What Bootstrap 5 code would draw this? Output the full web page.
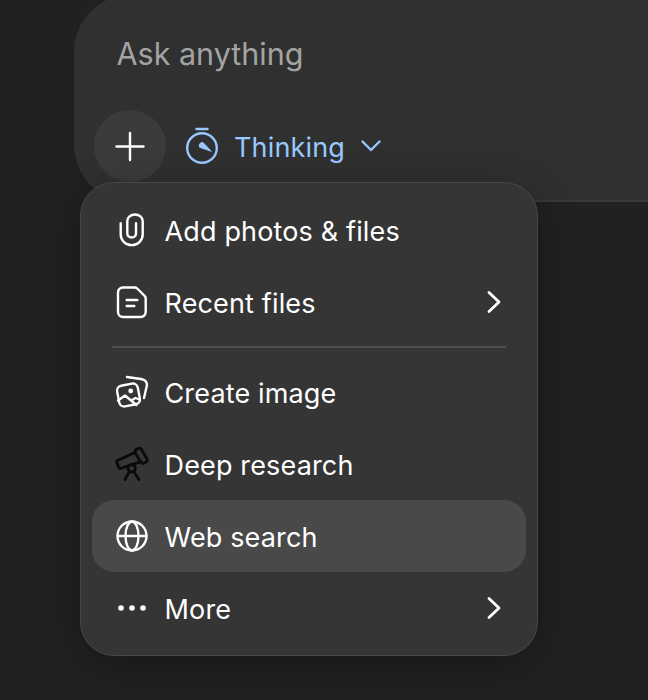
<!DOCTYPE html>
<html lang="en">
<head>
  <meta charset="UTF-8" />
  <meta name="viewport" content="width=device-width, initial-scale=1" />
  <title>Ask anything</title>
  <link href="https://cdn.jsdelivr.net/npm/bootstrap@5.3.3/dist/css/bootstrap.min.css" rel="stylesheet" />
  <style>
    html, body {
      height: 700px;
      overflow: hidden;
    }

    body {
      background-color: #212121;
      font-family: Inter, "Liberation Sans", sans-serif;
      color: #fff;
    }

    .stage {
      height: 700px;
      padding-left: 74px;
    }

    .composer {
      position: relative;
      height: 208px;
      margin-top: -6px;
      background-color: #303030;
      border-bottom: 2px solid #3a3a3a;
      border-radius: 58px 0 0 58px;
      padding: 38px 42.500px 0;
    }

    .ask-text {
      font-size: 30.5px;
      line-height: 44px;
      color: #a3a3a3;
    }

    .tools {
      position: absolute;
      left: 20px;
      top: 116px;
      gap: 19px;
    }

    .plus-btn {
      width: 72px;
      height: 72px;
      background-color: #3b3b3b;
    }

    .mode {
      color: #99c8ff;
      font-size: 27px;
      line-height: 40px;
      letter-spacing: .15px;
    }

    .mode-label {
      margin: 0 16px 0 15px;
      padding-top: 3px;
    }

    .tool-menu {
      position: absolute;
      left: 80px;
      top: 182px;
      width: 458px;
      height: 474px;
      padding: 11px;
      background-color: #353535;
      border: 1px solid #474747;
      border-radius: 34px;
      box-shadow: 0 8px 40px rgba(0, 0, 0, .3);
    }

    .menu-row {
      height: 72px;
      padding: 0 25.500px 0 24px;
      border-radius: 22px;
      font-size: 27px;
      letter-spacing: .15px;
      color: #fff;
    }

    .menu-row span {
      padding-top: 5px;
    }

    .menu-row.active-row {
      background-color: #494949;
    }

    .menu-icon {
      width: 32px;
      height: 32px;
      margin-right: 16.500px;
      flex: none;
    }

    .menu-icon.dark-icon {
      color: #0a0a0a;
      stroke-width: 2.8;
    }

    .menu-arrow {
      stroke-width: 2.8;
    }

    .menu-rule {
      height: 2px;
      margin: 8px 20px;
      background-color: #4f4f4f;
    }

    svg {
      display: block;
      overflow: visible;
      fill: none;
      stroke: currentColor;
      stroke-width: 2.4;
      stroke-linecap: round;
      stroke-linejoin: round;
    }
  </style>
</head>
<body>

  <div class="stage">
    <div class="composer">
      <div class="ask-text">Ask anything</div>
      <div class="tools d-flex align-items-center">
        <div class="plus-btn rounded-circle d-flex align-items-center justify-content-center">
          <svg width="30" height="30" viewBox="0 0 30 30"><path d="M15 2v27M1.500 15.500h27" /></svg>
        </div>
        <div class="mode d-flex align-items-center">
          <svg width="34" height="38" viewBox="0 0 34 38">
            <path d="M11.500 2h11" />
            <circle cx="17" cy="21" r="14.800" />
            <path d="M14.500 20a3.200 3.200 0 0 1 3.500-4.500l8 8.500z" fill="currentColor" stroke-width="1" />
          </svg>
          <span class="mode-label">Thinking</span>
          <svg width="20" height="12" viewBox="0 0 20 12"><path d="M1.500 1.500L10 10l8.500-8.500" /></svg>
        </div>
      </div>
    </div>
  </div>

  <div class="tool-menu">
    <div class="menu-row d-flex align-items-center">
      <svg class="menu-icon" viewBox="0 0 32 32"><path d="M4.700 9.300V20.600a11 10.500 0 0 0 22 0V7a7.700 6.500 0 0 0-15.400 0V19.500a4.350 4 0 0 0 8.700 0V9.300" /></svg>
      <span>Add photos &amp; files</span>
    </div>
    <div class="menu-row d-flex align-items-center">
      <svg class="menu-icon" viewBox="0 0 32 32"><path d="M7 1.500h12a3 3 0 0 1 2.200 1l7.500 7.500a3 3 0 0 1 1 2.200V26a5 5 0 0 1-5 5H7a5 5 0 0 1-5-5V6.500a5 5 0 0 1 5-5z" /><path d="M10.700 14h10.600M10.700 20h7.600" /></svg>
      <span>Recent files</span>
      <svg class="ms-auto menu-arrow" width="14" height="22" viewBox="0 0 14 22"><path d="M2 1.500L12 11 2 20.500" /></svg>
    </div>
    <div class="menu-rule"></div>
    <div class="menu-row d-flex align-items-center">
      <svg class="menu-icon" viewBox="0 0 32 32"><path d="M11 1l14 2q6 1 6 6l-3 13" /><rect x="2" y="8.500" width="21" height="21" rx="5" transform="rotate(-11 12.500 19)" /><circle cx="14.700" cy="15" r="2.400" fill="currentColor" stroke="none" /><path d="M2 24.500l7-5 11.500 9.500M16 24l3.500-2 4 1.500" /></svg>
      <span>Create image</span>
    </div>
    <div class="menu-row d-flex align-items-center">
      <svg class="menu-icon dark-icon" viewBox="0 0 32 32"><path d="M19 4.500L1.500 12.500a1.500 1.500 0 0 0-.8 2l2 5a1.500 1.500 0 0 0 2 .8L25 13.700" /><path d="M19 4.500q-.5-2.500 3-4 2.500-.8 3.500 1l5.500 9.500q1 2.500-2 3.800-3 1.500-4.500-1z" /><circle cx="15.700" cy="20.300" r="3.700" /><path d="M13.300 24l-4.300 7.500M18 24l5 7.500" /></svg>
      <span>Deep research</span>
    </div>
    <div class="menu-row active-row d-flex align-items-center">
      <svg class="menu-icon" viewBox="0 0 32 32"><circle cx="16" cy="16" r="14.500" /><ellipse cx="16" cy="16" rx="6.500" ry="14.500" /><path d="M2 16h28" /></svg>
      <span>Web search</span>
    </div>
    <div class="menu-row d-flex align-items-center">
      <svg class="menu-icon" viewBox="0 0 32 32"><circle cx="5" cy="16" r="2.800" fill="currentColor" stroke="none" /><circle cx="16" cy="16" r="2.800" fill="currentColor" stroke="none" /><circle cx="27" cy="16" r="2.800" fill="currentColor" stroke="none" /></svg>
      <span>More</span>
      <svg class="ms-auto menu-arrow" width="14" height="22" viewBox="0 0 14 22"><path d="M2 1.500L12 11 2 20.500" /></svg>
    </div>
  </div>

  <script src="https://cdn.jsdelivr.net/npm/bootstrap@5.3.3/dist/js/bootstrap.bundle.min.js"></script>
</body>
</html>
